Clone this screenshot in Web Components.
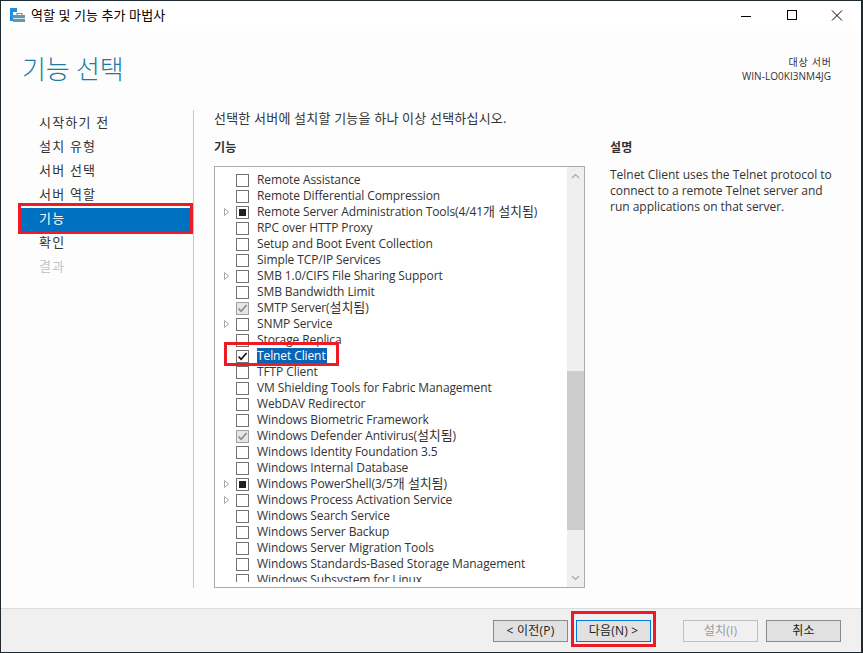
<!DOCTYPE html>
<html lang="ko"><head><meta charset="utf-8"><title>역할 및 기능 추가 마법사</title>
<style>
html,body{margin:0;padding:0;background:#1f2a30}
body{font:12px/16px "Open Sans","Noto Sans CJK KR",sans-serif;color:#222}
</style></head><body>
<wizard-window>
  <title-bar slot="title">역할 및 기능 추가 마법사</title-bar>
  <wizard-header slot="header"></wizard-header>
  <step-nav slot="nav"></step-nav>
  <feature-pane slot="main"></feature-pane>
  <wizard-footer slot="footer"></wizard-footer>
</wizard-window>
<script>
const FONT='"Open Sans","Noto Sans CJK KR",sans-serif';
function def(name,html,setup){
  customElements.define(name,class extends HTMLElement{
    constructor(){super();this.attachShadow({mode:'open'}).innerHTML=html;}
    connectedCallback(){if(setup&&!this._d){this._d=1;setup.call(this,this.shadowRoot);}}
  });
}
def('red-mark',`<style>:host{position:absolute;box-sizing:border-box;border:3px solid #ed1c24;display:block;pointer-events:none;z-index:5}</style>`);
def('wizard-window',`<style>
:host{display:flex;flex-direction:column;box-sizing:border-box;width:860px;height:651px;margin:1px 0 0 1px;background:#fdfdfd;position:relative;overflow:hidden}
.mid{flex:1;display:flex;min-height:0}
</style>
<slot name="title"></slot><slot name="header"></slot>
<div class="mid"><slot name="nav"></slot><slot name="main"></slot></div>
<slot name="footer"></slot>`);
def('title-bar',`<style>
:host{display:flex;align-items:center;height:30px;background:#fff;flex:none;font-size:13px;color:#000}
svg{display:block;flex:none}
.ic{margin-left:9px;margin-right:5px;width:16px;height:16px}
.t{flex:1;position:relative;top:-1px;letter-spacing:.08px}
.b{width:46px;height:30px;display:flex;align-items:center;justify-content:center}
.b svg{width:12px;height:12px}
</style>
<svg class="ic" viewBox="0 0 16 16"><rect x="0" y="0" width="7" height="4" fill="#1e8fe0"/><rect x="0" y="4" width="3" height="9" fill="#1e8fe0"/><path d="M3 7h12v7H3z" fill="#6a93ad"/><path d="M7 7V5.5h5V7" fill="none" stroke="#6a93ad" stroke-width="1.2"/><rect x="3" y="10" width="12" height="1" fill="#d7e3ea"/></svg>
<span class="t"><slot></slot></span>
<span class="b"><svg viewBox="0 0 12 12"><path d="M1 6.5h10" stroke="#000" fill="none"/></svg></span>
<span class="b"><svg viewBox="0 0 12 12"><rect x="1.5" y=".5" width="9" height="9" stroke="#000" fill="none"/></svg></span>
<span class="b" style="width:44px;margin-right:2px"><svg viewBox="0 0 12 12"><path d="M1 .5l10 10M11 .5l-10 10" stroke="#000" fill="none"/></svg></span>`);
def('wizard-header',`<style>
:host{display:flex;justify-content:space-between;height:79px;flex:none;background:#fdfdfd}
h1{margin:20px 0 0 21px;font:300 26px/36px ${FONT};color:#1b7ba6;letter-spacing:-.2px}
.r{margin:24px 30px 0 0;text-align:right;font-size:10px;line-height:14px;color:#333;letter-spacing:.05px}
.k{letter-spacing:.8px;margin-right:-.8px}
</style><h1>기능 선택</h1><div class="r"><div class="k">대상 서버</div><div>WIN-LO0KI3NM4JG</div></div>`);
def('step-item',`<style>
:host{display:block;height:24px;line-height:20px;padding-left:18px;margin:0 0 0 20px;width:169px;box-sizing:border-box;color:#333;font-size:13px;letter-spacing:1.2px}
:host([selected]){background:#0070c0;color:#fff}
:host([disabled]){color:#c4c4c4}
</style><slot></slot>`);
def('step-nav',`<style>
:host{display:block;position:relative;width:193px;box-sizing:border-box;border-right:1px solid #c8c8c8;flex:none;height:478px;padding-top:2px;align-self:flex-start}
</style>
<step-item>시작하기 전</step-item><step-item>설치 유형</step-item><step-item>서버 선택</step-item><step-item>서버 역할</step-item>
<step-item selected>기능</step-item><step-item>확인</step-item><step-item disabled>결과</step-item>
<red-mark style="left:17px;top:93px;width:175px;height:31px"></red-mark>`);
def('tree-check',`<style>
:host{display:block;box-sizing:border-box;width:13px;height:13px;border:1px solid #707070;background:#fff;position:relative;flex:none}
:host([state=partial])::after{content:"";position:absolute;left:2px;top:2px;width:7px;height:7px;background:#222}
:host([state=locked]){border-color:#a0a0a0;background:#e6e6e6}
svg{display:none;position:absolute;left:0;top:0;width:11px;height:11px}
:host([state=on]) svg,:host([state=locked]) svg{display:block}
:host([state=locked]) path{stroke:#8c8c8c}
</style><svg viewBox="0 0 11 11"><path d="M1.5 5.5l2.6 2.8L9.6 2" fill="none" stroke="#111" stroke-width="1.7"/></svg>`);
def('feature-row',`<style>
:host{display:flex;align-items:center;height:16px;font-size:12px;color:#333;letter-spacing:-.1px;white-space:nowrap}
.ar{width:7px;height:8px;margin:0 6px 0 8px;flex:none;visibility:hidden}
:host([tree]) .ar{visibility:visible}
tree-check{margin-right:8px}
.l{height:16px;line-height:15px;padding:0 1px 0 0}
:host([sel]) .l{background:#0a64b4;color:#fff}
</style><svg class="ar" viewBox="0 0 7 8"><path d="M1.5 .5l4 3.5-4 3.5z" fill="#fff" stroke="#a6a6a6"/></svg><tree-check></tree-check><span class="l"><slot></slot></span>`,
function(r){r.querySelector('tree-check').setAttribute('state',this.getAttribute('state')||'off');});
const ROWS=[["Remote Assistance"],["Remote Differential Compression"],["Remote Server Administration Tools(4/41개 설치됨)","partial",1],["RPC over HTTP Proxy"],["Setup and Boot Event Collection"],["Simple TCP/IP Services"],["SMB 1.0/CIFS File Sharing Support","",1],["SMB Bandwidth Limit"],["SMTP Server(설치됨)","locked"],["SNMP Service","",1],["Storage Replica"],["Telnet Client","on",0,1],["TFTP Client"],["VM Shielding Tools for Fabric Management"],["WebDAV Redirector"],["Windows Biometric Framework"],["Windows Defender Antivirus(설치됨)","locked"],["Windows Identity Foundation 3.5"],["Windows Internal Database"],["Windows PowerShell(3/5개 설치됨)","partial",1],["Windows Process Activation Service","",1],["Windows Search Service"],["Windows Server Backup"],["Windows Server Migration Tools"],["Windows Standards-Based Storage Management"],["Windows Subsystem for Linux"]];
def('feature-list',`<style>
:host{display:flex;box-sizing:border-box;width:371px;height:422px;border:1px solid #ababab;background:#fff;flex:none}
.v{flex:1;height:415px;overflow:hidden;padding-top:5px;box-sizing:border-box}
.k{font-size:13px}
.sb{width:17px;background:#efefef;display:flex;flex-direction:column;align-items:center;flex:none}
.sb svg{width:9px;height:6px;flex:none;margin:6px 0}
.tr{flex:1;width:100%;display:flex;flex-direction:column;min-height:0}
.sp{height:186px;flex:none}.th{height:159px;background:#cdcdcd;flex:none}
</style><div class="v"></div>
<div class="sb"><svg viewBox="0 0 9 6"><path d="M1 5l3.5-3.5L8 5" fill="none" stroke="#a8a8a8" stroke-width="1.2"/></svg>
<div class="tr"><div class="sp"></div><div class="th"></div></div>
<svg viewBox="0 0 9 6"><path d="M1 1l3.5 3.5L8 1" fill="none" stroke="#a8a8a8" stroke-width="1.2"/></svg></div>`,
function(r){const v=r.querySelector('.v');for(const [t,s,a,sel] of ROWS){const e=document.createElement('feature-row');e.innerHTML=t.replace(/[가-힣]+( [가-힣]+)*/g,'<span class="k">$&</span>');if(s)e.setAttribute('state',s);if(a)e.setAttribute('tree','');if(sel)e.setAttribute('sel','');v.append(e);}});
def('feature-pane',`<style>
:host{display:flex;flex-direction:column;flex:1;padding:0 0 0 20px;min-width:0;position:relative;font-size:12px;color:#333}
.i{height:16px;font-size:13px;letter-spacing:.2px}
.cols{display:flex;margin-top:14px}
h2{font:700 12px/16px ${FONT};margin:0 0 11px;color:#333;letter-spacing:.3px}
.l h2{margin-bottom:10px}
.d{margin-left:25px;width:230px}
p{margin:0;line-height:16px;letter-spacing:-.02px}
</style><div class="i">선택한 서버에 설치할 기능을 하나 이상 선택하십시오.</div>
<div class="cols"><div class="l"><h2>기능</h2><feature-list></feature-list></div>
<div class="d"><h2>설명</h2><p>Telnet Client uses the Telnet protocol to connect to a remote Telnet server and run applications on that server.</p></div></div>
<red-mark style="left:30px;top:232px;width:115px;height:24px"></red-mark>`);
def('wiz-button',`<style>
:host{display:flex;align-items:center;justify-content:center;box-sizing:border-box;width:75px;height:22px;border:1px solid #adadad;background:#e1e1e1;color:#222;font-size:12px;line-height:20px;flex:none;letter-spacing:.2px;padding-top:1px}
:host([focus]){border-color:#0078d7;background:#e1e1e1}
:host([disabled]){background:#f0f0f0;border-color:#bfbfbf;color:#9a9a9a}
:host([kind=pri]){border:1px solid #8a8a8a}
</style><slot></slot>`);
def('wizard-footer',`<style>
:host{display:flex;align-items:center;box-sizing:border-box;height:44px;flex:none;background:#f0f0f0;border-top:1px solid #dcdcdc;padding:0 0 0 492px;position:relative;color:#222}
.g{width:8px;flex:none}.G{width:32px;flex:none}
</style><wiz-button kind="pri">&lt; 이전(P)</wiz-button><span class="g"></span><wiz-button focus>다음(N) &gt;</wiz-button><span class="G"></span><wiz-button disabled>설치(I)</wiz-button><span class="g"></span><wiz-button kind="pri">취소</wiz-button>
<red-mark style="left:570px;top:2px;width:85px;height:36px"></red-mark>`);
</script>
</body></html>
